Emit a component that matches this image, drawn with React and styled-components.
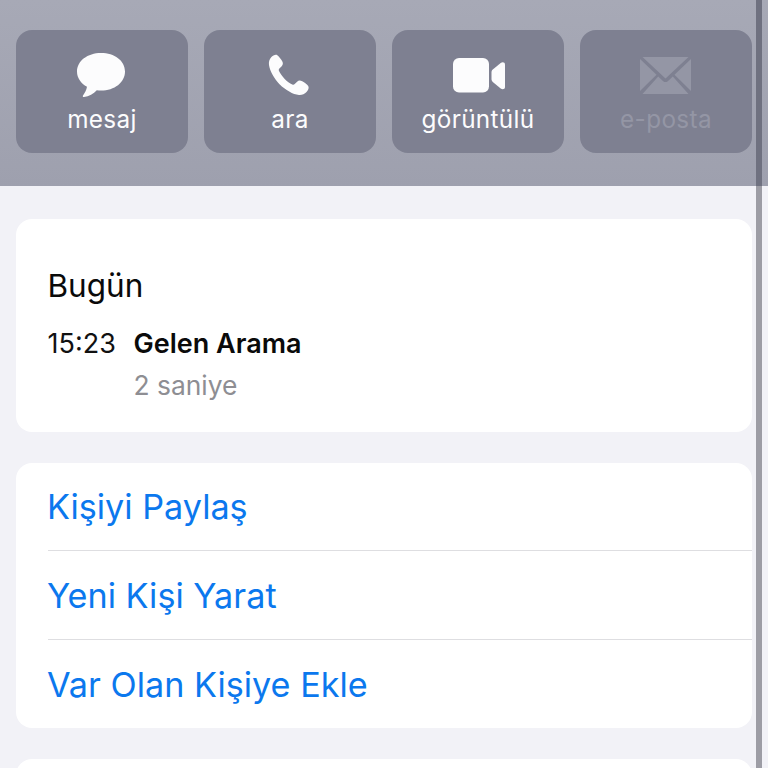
import React from 'react'
import styled, { createGlobalStyle } from 'styled-components'

const GlobalStyle = createGlobalStyle`
  html, body {
    margin: 0;
    padding: 0;
    height: 768px;
    overflow: hidden;
    background: #f2f2f7;
    font-family: Inter, "Liberation Sans", sans-serif;
  }
`

const Page = styled.div`
  position: relative;
  width: 768px;
  height: 768px;
  overflow: hidden;
  background: #f2f2f7;
`

const Header = styled.header`
  height: 186px;
  box-sizing: border-box;
  padding: 30px 16px 0;
  display: grid;
  grid-template-columns: repeat(4, 172px);
  grid-template-rows: 123px;
  gap: 16px;
  background: linear-gradient(#a7a9b6, #9ea0ae);
`

const ActionButton = styled.div`
  display: flex;
  flex-direction: column;
  align-items: center;
  border-radius: 16px;
  background: #7e8091;
  color: ${(p) => (p.$disabled ? '#9496a5' : '#fcfcfd')};
`

const IconSlot = styled.div`
  height: 50px;
  margin-top: 20px;
  display: flex;
  align-items: center;
  justify-content: center;
  svg {
    display: block;
    fill: currentColor;
    margin-left: ${(p) => p.$nudge}px;
  }
`

const ActionLabel = styled.div`
  margin-top: 5px;
  font-size: 24.3px;
  line-height: 28px;
  letter-spacing: 0.35px;
`

const Content = styled.main`
  padding: 33px 16px 0;
  display: flex;
  flex-direction: column;
  gap: 31px;
`

const Card = styled.section`
  background: #ffffff;
  border-radius: 16px;
`

const CallCard = styled(Card)`
  height: 213px;
  box-sizing: border-box;
  padding: 48px 31.5px 0;
`

const DayTitle = styled.div`
  font-size: 31.5px;
  line-height: 38px;
  color: #0a0a0a;
`

const CallRow = styled.div`
  margin-top: 23px;
  display: grid;
  grid-template-columns: 86px 1fr;
`

const CallTime = styled.div`
  font-size: 27px;
  line-height: 32px;
  color: #111;
`

const CallType = styled.div`
  font-size: 27px;
  line-height: 32px;
  font-weight: 600;
  color: #0a0a0a;
`

const CallLength = styled.div`
  margin-top: 9px;
  font-size: 26.4px;
  line-height: 32px;
  color: #8e8e93;
`

const ActionCard = styled(Card)`
  height: 265px;
  padding-left: 32px;
  display: grid;
  grid-template-rows: 88px 89px 88px;
`

const ActionRow = styled.div`
  display: flex;
  align-items: center;
  font-size: 34.2px;
  color: #0b78ee;
  text-indent: -1px;
  border-bottom: ${(p) => (p.$last ? 'none' : '1px solid #dedee1')};
`

const NextCard = styled(Card)`
  height: 40px;
`

// scroll indicator, sits over the page
const ScrollBar = styled.div`
  position: absolute;
  top: 0;
  left: 756px;
  width: 6px;
  height: 768px;
  background: linear-gradient(#6f7180 0, #6f7180 186px, #9d9da5 186px);
`

const MessageIcon = () => (
  <svg width="50" height="46" viewBox="0 0 50 46">
    <path d="M25 1C11.5 1 1 9 1 19.500c0 6.500 4 12 10 15.300-.6 3.500-2.200 6.400-4 8.700-.6.8 0 1.700 1 1.500 5-.7 9.500-2.800 12.800-6.700 1.400.2 2.800.3 4.200.3 13.500 0 24-8.200 24-19.100S38.500 1 25 1z" />
  </svg>
)

const PhoneIcon = () => (
  <svg width="42" height="42" viewBox="0 0 42 42">
    <path d="M3.200 3.300C5 1.400 7.600.2 9.300 1.200c1.500.9 3.400 3.500 4.800 5.900 1.200 2.100 1 3.700-.4 5.200l-2.300 2.300c-.7.700-.8 1.500-.4 2.400 1.300 2.700 3.400 5.600 5.700 7.900 2.300 2.300 5 4.200 7.600 5.500.9.400 1.700.3 2.400-.4l2.400-2.300c1.500-1.400 3.100-1.600 5.100-.4 2.400 1.400 5 3.200 6 4.600 1.100 1.600.1 4.200-1.700 6.100-2 2.100-4.600 3.100-7.500 2.900-6.100-.5-13.300-4.800-19.500-10.700C6.300 24.500 1.800 17.200 1 11c-.4-2.900.3-5.600 2.200-7.700z" />
  </svg>
)

const VideoIcon = () => (
  <svg width="53" height="35" viewBox="0 0 53 35">
    <rect x="0" y="0" width="36" height="34.500" rx="6" />
    <path d="M38.500 14.500c0-1.200.4-2.100 1.300-2.900l7.900-6.700c1.500-1.200 4.300-1 4.300 1.500v22.700c0 2.400-2.700 2.800-4.300 1.500l-7.900-6.600c-.9-.8-1.300-1.700-1.300-2.900z" />
  </svg>
)

const MailIcon = () => (
  <svg width="51" height="37" viewBox="0 0 51 37">
    <path d="M2.500 0h46L25.500 21.500z" />
    <path d="M0 2v32l16.500-16.300z" />
    <path d="M51 2v32L34.500 17.700z" />
    <path d="M2.500 37h46L32.800 19.600l-5 4.600c-1.400 1.200-3.200 1.200-4.600 0l-5-4.600z" />
  </svg>
)

const actions = [
  { label: 'mesaj', icon: <MessageIcon />, nudge: -2 },
  { label: 'ara', icon: <PhoneIcon />, nudge: -2 },
  { label: 'görüntülü', icon: <VideoIcon />, nudge: 2 },
  { label: 'e-posta', icon: <MailIcon />, nudge: -2, disabled: true },
]

const App = () => {
  return (
    <Page>
      <GlobalStyle />
      <Header>
        {actions.map((a) => (
          <ActionButton key={a.label} $disabled={a.disabled}>
            <IconSlot $nudge={a.nudge}>{a.icon}</IconSlot>
            <ActionLabel>{a.label}</ActionLabel>
          </ActionButton>
        ))}
      </Header>
      <Content>
        <CallCard>
          <DayTitle>Bugün</DayTitle>
          <CallRow>
            <CallTime>15:23</CallTime>
            <div>
              <CallType>Gelen Arama</CallType>
              <CallLength>2 saniye</CallLength>
            </div>
          </CallRow>
        </CallCard>
        <ActionCard>
          <ActionRow>Kişiyi Paylaş</ActionRow>
          <ActionRow>Yeni Kişi Yarat</ActionRow>
          <ActionRow $last>Var Olan Kişiye Ekle</ActionRow>
        </ActionCard>
        <NextCard />
      </Content>
      <ScrollBar />
    </Page>
  )
}

export default App
